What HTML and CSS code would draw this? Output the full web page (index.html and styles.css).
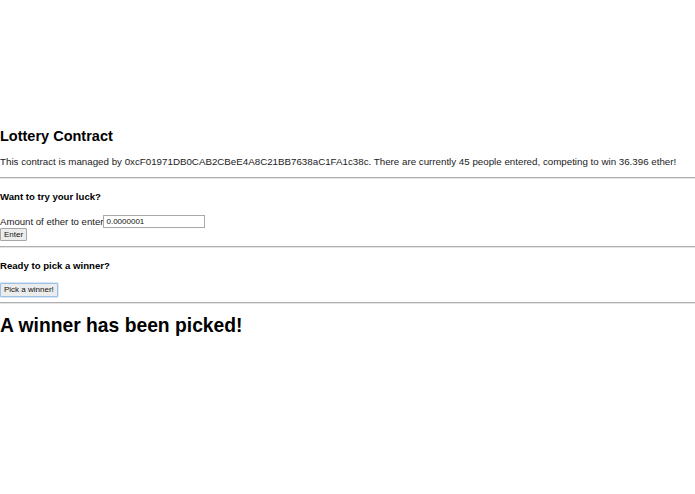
FILE: index.html
```html
<!DOCTYPE html>
<html>
<head>
<meta charset="utf-8">
<link rel="stylesheet" href="styles.css">
</head>
<body>
<div class="page">
  <h2 class="title">Lottery Contract</h2>
  <p class="info">This contract is managed by 0xcF01971DB0CAB2CBeE4A8C21BB7638aC1FA1c38c. There are currently 45 people entered, competing to win 36.396 ether!</p>
  <hr class="rule">
  <form class="entry">
    <h4 class="section">Want to try your luck?</h4>
    <div class="field">
      <label class="label">Amount of ether to enter</label><input class="amount" value="0.0000001">
    </div>
    <button type="button" class="btn">Enter</button>
  </form>
  <hr class="rule">
  <h4 class="section section-tight">Ready to pick a winner?</h4>
  <button type="button" class="btn btn-focus">Pick a winner!</button>
  <hr class="rule">
  <h1 class="result">A winner has been picked!</h1>
</div>
</body>
</html>
```
FILE: styles.css
```css
html, body {
  margin: 0;
  background: #ffffff;
}
body {
  font-family: "Liberation Sans", Arial, sans-serif;
  font-size: 9.7px;
  color: #111;
}
.page {
  padding-top: 116px;
}
.title {
  font-size: 14.5px;
  font-weight: bold;
  color: #000;
  margin: 12px 0;
}
.info {
  margin: 9.6px 0;
  font-size: 9.75px;
  color: #222;
}
.rule {
  margin: 5px 0;
  border: 0;
  border-top: 1px solid #b0b0b0;
  border-bottom: 1px solid #e4e4e4;
  height: 0;
}
.entry {
  margin: 0;
}
.section {
  font-size: 9.6px;
  font-weight: bold;
  color: #000;
  margin: 12.3px 0 12.8px;
}
.section-tight {
  margin-bottom: 12px;
}
.field {
  display: flex;
  align-items: center;
  height: 13px;
}
.label {
  font-size: 9.6px;
  color: #222;
}
.amount {
  box-sizing: border-box;
  width: 102px;
  height: 13px;
  margin: 0;
  padding: 0 2px;
  font-family: "Liberation Sans", Arial, sans-serif;
  font-size: 8px;
  color: #111;
  border: 1px solid #a9a9a9;
  background: #fff;
}
.btn {
  display: block;
  box-sizing: border-box;
  margin: 0;
  padding: 0 3px;
  height: 13px;
  font-family: "Liberation Sans", Arial, sans-serif;
  font-size: 8px;
  color: #111;
  background: #ececec;
  border: 1px solid #a6a6a6;
  border-radius: 1px;
}
.btn-focus {
  height: 14px;
  padding: 0 3px;
  border: 1px solid #9cc0e6;
  box-shadow: 0 0 0 1px #d6e6f6;
}
.result {
  font-size: 19.3px;
  font-weight: bold;
  color: #000;
  margin: 11px 0;
}
```
